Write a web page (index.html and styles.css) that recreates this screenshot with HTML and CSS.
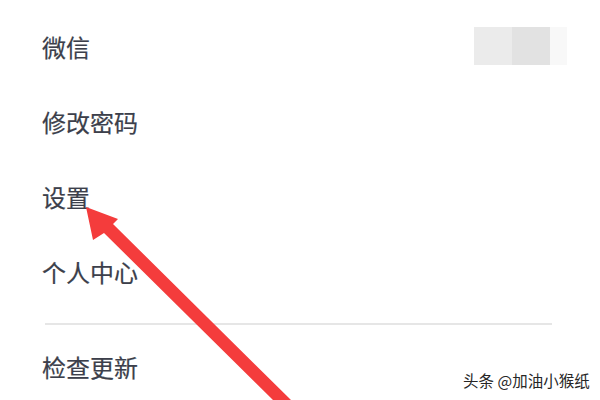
FILE: index.html
```html
<!DOCTYPE html>
<html lang="zh">
<head>
<meta charset="utf-8">
<link rel="stylesheet" href="styles.css">
</head>
<body>
<div class="page">
  <ul class="menu">
    <li class="item item-wechat">
      <span class="label">微信</span>
      <span class="qr"><span class="qr-a"></span><span class="qr-b"></span><span class="qr-c"></span></span>
    </li>
    <li class="item"><span class="label">修改密码</span></li>
    <li class="item"><span class="label">设置</span></li>
    <li class="item"><span class="label">个人中心</span></li>
  </ul>
  <div class="divider"></div>
  <div class="item item-last"><span class="label">检查更新</span></div>

  <svg class="arrow" width="600" height="400" viewBox="0 0 600 400">
    <polygon points="86,207 118,219 113,224 291,400 273,400 104,233 93,240" fill="#f43c3c"/>
  </svg>
  <div class="watermark">头条 @加油小猴纸</div>
</div>
</body>
</html>
```

FILE: styles.css
```css
html, body {
  margin: 0;
  padding: 0;
  background: #ffffff;
}
.page {
  position: relative;
  width: 600px;
  height: 400px;
  overflow: hidden;
  font-family: "Noto Sans CJK SC", "Noto Sans", sans-serif;
  color: #3c3f4b;
}
.menu {
  list-style: none;
  margin: 0;
  padding: 9px 0 0 0;
}
.item {
  display: flex;
  align-items: center;
  justify-content: space-between;
  height: 75px;
  padding-left: 42px;
  padding-right: 33px;
  font-size: 24px;
}
.label {
  line-height: 1;
  -webkit-text-stroke: 0.2px #3c3f4b;
}
.qr {
  display: flex;
  height: 38px;
  margin-top: -2px;
  filter: blur(0.6px);
}
.qr-a { width: 38px; background: #ebebeb; }
.qr-b { width: 38px; background: #e2e2e2; }
.qr-c { width: 17px; background: #f8f8f8; }
.divider {
  margin: 14px 48px 0 45px;
  height: 2px;
  background: #e6e6e6;
}
.item-last {
  height: 84px;
}
.arrow {
  position: absolute;
  left: 0;
  top: 0;
}
.watermark {
  position: absolute;
  left: 463px;
  top: 369px;
  font-size: 15.5px;
  color: #262626;
  text-shadow: 0 0 2px #fff, 0 0 1px #fff;
  white-space: nowrap;
}
```
